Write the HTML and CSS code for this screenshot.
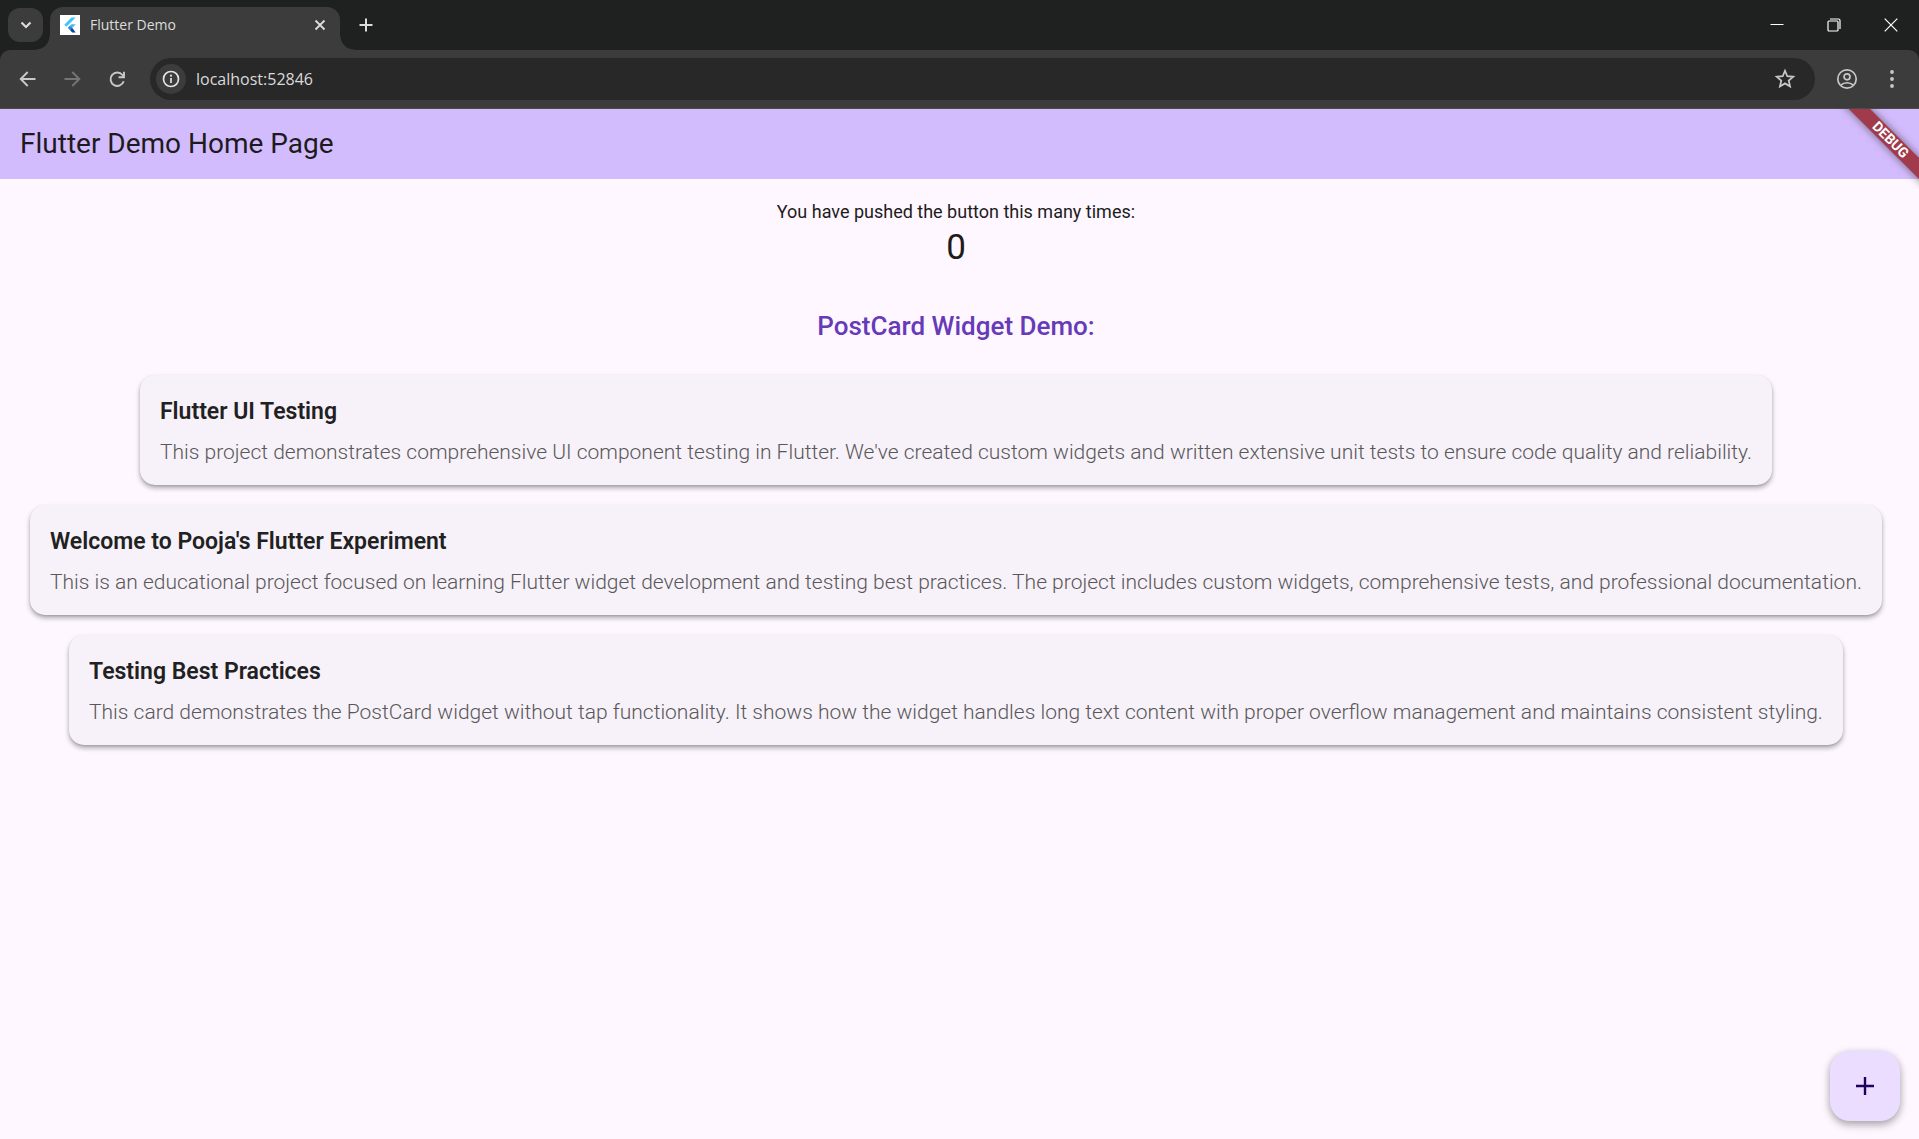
FILE: index.html
```html
<!DOCTYPE html>
<html lang="en">
<head>
<meta charset="utf-8">
<meta name="viewport" content="width=device-width, initial-scale=1">
<title>Flutter Demo</title>
<link rel="stylesheet" href="styles.css">
</head>
<body>
<header class="browser">
  <div class="tab-strip">
    <button class="tab-search" aria-label="Search tabs">
      <svg width="12" height="8" viewBox="0 0 12 8"><path d="M1.500 1.500 6 6l4.500-4.500" fill="none" stroke="currentColor" stroke-width="2.200"/></svg>
    </button>
    <div class="tab">
      <svg class="favicon" width="20" height="20" viewBox="0 0 20 20">
        <rect width="20" height="20" fill="#fff"/>
        <path d="M11.500 2.500h4.200L6.400 11.800 4.300 9.700z" fill="#42c5f5"/>
        <path d="M11.500 9.200h4.200l-3.700 3.700-2 2-2.100-2.100z" fill="#42b8f0"/>
        <path d="M7.900 12.800 10 10.700l2.100 2.100-2.100 2.100z" fill="#2a8be8"/>
        <path d="M10 14.900l2.100-2.100 3.600 4.700h-3.600z" fill="#08499c"/>
      </svg>
      <span class="tab-title">Flutter Demo</span>
      <button class="tab-close" aria-label="Close tab">
        <svg width="12" height="12" viewBox="0 0 12 12"><path d="m1.500 1.500 9 9m0-9-9 9" stroke="currentColor" stroke-width="1.800"/></svg>
      </button>
    </div>
    <button class="new-tab" aria-label="New tab">
      <svg width="14" height="14" viewBox="0 0 14 14"><path d="M7 .5v13M.5 7h13" stroke="currentColor" stroke-width="2"/></svg>
    </button>
    <div class="window-controls">
      <button aria-label="Minimize"><svg width="14" height="14" viewBox="0 0 14 14"><path d="M.5 6.500h13" stroke="currentColor"/></svg></button>
      <button aria-label="Restore"><svg width="14" height="14" viewBox="0 0 14 14" fill="none" stroke="currentColor" stroke-width="1.200"><rect x="1" y="3" width="10" height="10" rx="1"/><path d="M3 1h8.500q1.500 0 1.500 1.500V11"/></svg></button>
      <button aria-label="Close"><svg width="14" height="14" viewBox="0 0 14 14"><path d="m.7.7 12.600 12.600m0-12.600L.7 13.300" stroke="currentColor" stroke-width="1.200"/></svg></button>
    </div>
  </div>
  <div class="toolbar">
    <button class="tool" aria-label="Back">
      <svg width="17" height="16" viewBox="0 0 17 16" fill="none" stroke="currentColor" stroke-width="1.900"><path d="M16.500 8H2M8.700 1 1.700 8l7 7"/></svg>
    </button>
    <button class="tool" aria-label="Forward" disabled>
      <svg width="17" height="16" viewBox="0 0 17 16" fill="none" stroke="currentColor" stroke-width="1.900"><path d="M.5 8H15M8.300 1l7 7-7 7"/></svg>
    </button>
    <button class="tool" aria-label="Reload">
      <svg width="17" height="17" viewBox="0 0 17 17" fill="none" stroke="currentColor" stroke-width="1.900"><path d="M14.700 10.200A6.700 6.700 0 1 1 13.500 4l1.500 1.800M15 .8v5.400H9.600"/></svg>
    </button>
    <div class="omnibox">
      <button class="site-info" aria-label="Site information">
        <svg width="18" height="18" viewBox="0 0 18 18"><circle cx="9" cy="9" r="7.500" fill="none" stroke="currentColor" stroke-width="1.700"/><path d="M9 8v5" stroke="currentColor" stroke-width="1.700"/><circle cx="9" cy="5.700" r="1.100" fill="currentColor"/></svg>
      </button>
      <input class="address" type="text" aria-label="Address" value="localhost:52846" spellcheck="false">
      <button class="bookmark" aria-label="Bookmark this page">
        <svg width="22" height="22" viewBox="0 0 20 20"><path d="m10 2.500 2.100 5 5.400.5-4.100 3.500 1.200 5.300L10 14l-4.600 2.800 1.200-5.300L2.500 8l5.400-.5z" fill="none" stroke="currentColor" stroke-width="1.600"/></svg>
      </button>
    </div>
    <button class="tool" aria-label="Profile">
      <svg width="22" height="22" viewBox="0 0 22 22" fill="none" stroke="currentColor" stroke-width="1.700"><circle cx="11" cy="11" r="9.200"/><circle cx="11" cy="8.800" r="3"/><path d="M4.800 17.200c3.300-3.300 9.100-3.300 12.400 0"/></svg>
    </button>
    <button class="tool" aria-label="Menu">
      <svg width="6" height="20" viewBox="0 0 6 20" fill="currentColor"><circle cx="3" cy="3" r="1.900"/><circle cx="3" cy="10" r="1.900"/><circle cx="3" cy="17" r="1.900"/></svg>
    </button>
  </div>
</header>
<div class="app">
  <header class="app-bar"><h1>Flutter Demo Home Page</h1></header>
  <div class="banner"><span>DEBUG</span></div>
  <main class="content">
    <p class="prompt">You have pushed the button this many times:</p>
    <output class="count">0</output>
    <h2 class="section-title">PostCard Widget Demo:</h2>
    <article class="post-card">
      <h3>Flutter UI Testing</h3>
      <p>This project demonstrates comprehensive UI component testing in Flutter. We've created custom widgets and written extensive unit tests to ensure code quality and reliability.</p>
    </article>
    <article class="post-card">
      <h3>Welcome to Pooja's Flutter Experiment</h3>
      <p>This is an educational project focused on learning Flutter widget development and testing best practices. The project includes custom widgets, comprehensive tests, and professional documentation.</p>
    </article>
    <article class="post-card">
      <h3>Testing Best Practices</h3>
      <p>This card demonstrates the PostCard widget without tap functionality. It shows how the widget handles long text content with proper overflow management and maintains consistent styling.</p>
    </article>
  </main>
  <button class="fab" aria-label="Increment">
    <svg width="18" height="18" viewBox="0 0 18 18"><path d="M9 0v18M0 9h18" stroke="currentColor" stroke-width="2.400"/></svg>
  </button>
</div>
</body>
</html>
```
FILE: styles.css
```css
* {
  box-sizing: border-box;
}

body {
  margin: 0;
  min-height: 100vh;
  display: flex;
  flex-direction: column;
  font-family: Roboto, sans-serif;
  color: #1d1b20;
  background: #fef7ff;
}

h1, h2, h3, p {
  margin: 0;
}

button {
  display: flex;
  align-items: center;
  justify-content: center;
  flex: none;
  padding: 0;
  border: 0;
  background: none;
  color: inherit;
}

/* Browser window frame */
.browser {
  background: #1f2120;
  color: #dcdcdc;
  font-family: "Open Sans", sans-serif;
}

.tab-strip {
  display: flex;
  align-items: flex-start;
  height: 50px;
  padding-left: 8px;
}

.tab-search {
  width: 35px;
  height: 34px;
  margin: 8px 7px 0 0;
  border-radius: 12px;
  background: #3c3c3c;
}

.tab {
  position: relative;
  display: flex;
  align-items: center;
  gap: 10px;
  width: 290px;
  height: 43px;
  margin-top: 7px;
  padding: 0 10px 7px;
  border-radius: 13px 13px 0 0;
  background: #3c3c3c;
}

.tab::before,
.tab::after {
  content: "";
  position: absolute;
  bottom: 0;
  width: 14px;
  height: 14px;
}

.tab::before {
  right: 100%;
  background: radial-gradient(circle at 0 0, transparent 13px, #3c3c3c 14px);
}

.tab::after {
  left: 100%;
  background: radial-gradient(circle at 100% 0, transparent 13px, #3c3c3c 14px);
}

.tab-title {
  flex: 1;
  font-size: 14px;
  line-height: 20px;
}

.tab-close {
  width: 20px;
  height: 20px;
}

.new-tab {
  width: 34px;
  height: 34px;
  margin: 8px 0 0 9px;
}

.window-controls {
  display: flex;
  margin-left: auto;
  color: #fff;
}

.window-controls button {
  width: 57px;
  height: 49px;
}

.toolbar {
  display: flex;
  align-items: center;
  height: 59px;
  padding: 0 5px;
  border-bottom: 1px solid #4a4a4a;
  border-radius: 10px 10px 0 0;
  background: #3c3c3c;
  color: #c8c8c8;
}

.tool {
  width: 45px;
  height: 42px;
}

.tool:disabled {
  color: #757575;
}

.omnibox {
  display: flex;
  flex: 1;
  align-items: center;
  gap: 10px;
  height: 42px;
  margin: 0 9px 0 10px;
  padding: 0 15px 0 6px;
  border-radius: 21px;
  background: #282828;
}

.site-info {
  width: 30px;
  height: 30px;
  border-radius: 50%;
  background: #3c3c3c;
  color: #e3e3e3;
}

.address {
  flex: 1;
  min-width: 0;
  padding: 0;
  border: 0;
  outline: 0;
  background: none;
  color: #dadada;
  font-family: inherit;
  font-size: 16px;
  line-height: 24px;
}

.bookmark {
  width: 30px;
  height: 30px;
}

/* Application */
.app {
  position: relative;
  flex: 1;
}

.app-bar {
  display: flex;
  align-items: center;
  height: 70px;
  padding: 0 20px;
  background: #d3bcfd;
}

.app-bar h1 {
  font-size: 28px;
  font-weight: 400;
  line-height: 36px;
}

.banner {
  position: absolute;
  top: 0;
  right: 0;
  width: 80px;
  height: 80px;
  overflow: hidden;
}

.banner span {
  position: absolute;
  top: 22px;
  left: -20px;
  width: 140px;
  height: 15px;
  padding-left: 4px;
  transform: rotate(45deg);
  background: #a13a4a;
  box-shadow: 0 0 8px rgba(0, 0, 0, 0.5);
  color: #fff;
  font-size: 14px;
  font-weight: 700;
  line-height: 15px;
  text-align: center;
}

.content {
  display: flex;
  flex-direction: column;
  align-items: center;
  width: fit-content;
  padding: 20px;
}

.prompt {
  font-size: 18px;
  line-height: 25px;
}

.count {
  font-size: 35px;
  line-height: 48px;
}

.section-title {
  margin: 36px 0 21px;
  color: #673ab7;
  font-size: 26px;
  font-weight: 500;
  line-height: 36px;
}

.post-card {
  display: flex;
  flex-direction: column;
  gap: 10px;
  margin: 10px;
  padding: 22px 20px 18px;
  border-radius: 15px;
  background: #f7f1f9;
  box-shadow: 0 3px 5px rgba(0, 0, 0, 0.32), 0 1px 2px rgba(0, 0, 0, 0.1);
}

.post-card h3 {
  color: #212121;
  font-size: 23px;
  font-weight: 600;
  line-height: 30px;
}

.post-card p {
  color: #585858;
  font-size: 21px;
  font-weight: 300;
  line-height: 30px;
}

.fab {
  position: fixed;
  right: 19px;
  bottom: 18px;
  width: 70px;
  height: 70px;
  border-radius: 20px;
  background: #eaddff;
  box-shadow: 0 4px 8px rgba(0, 0, 0, 0.28), 0 1px 8px rgba(0, 0, 0, 0.12);
  color: #21005d;
}
```
